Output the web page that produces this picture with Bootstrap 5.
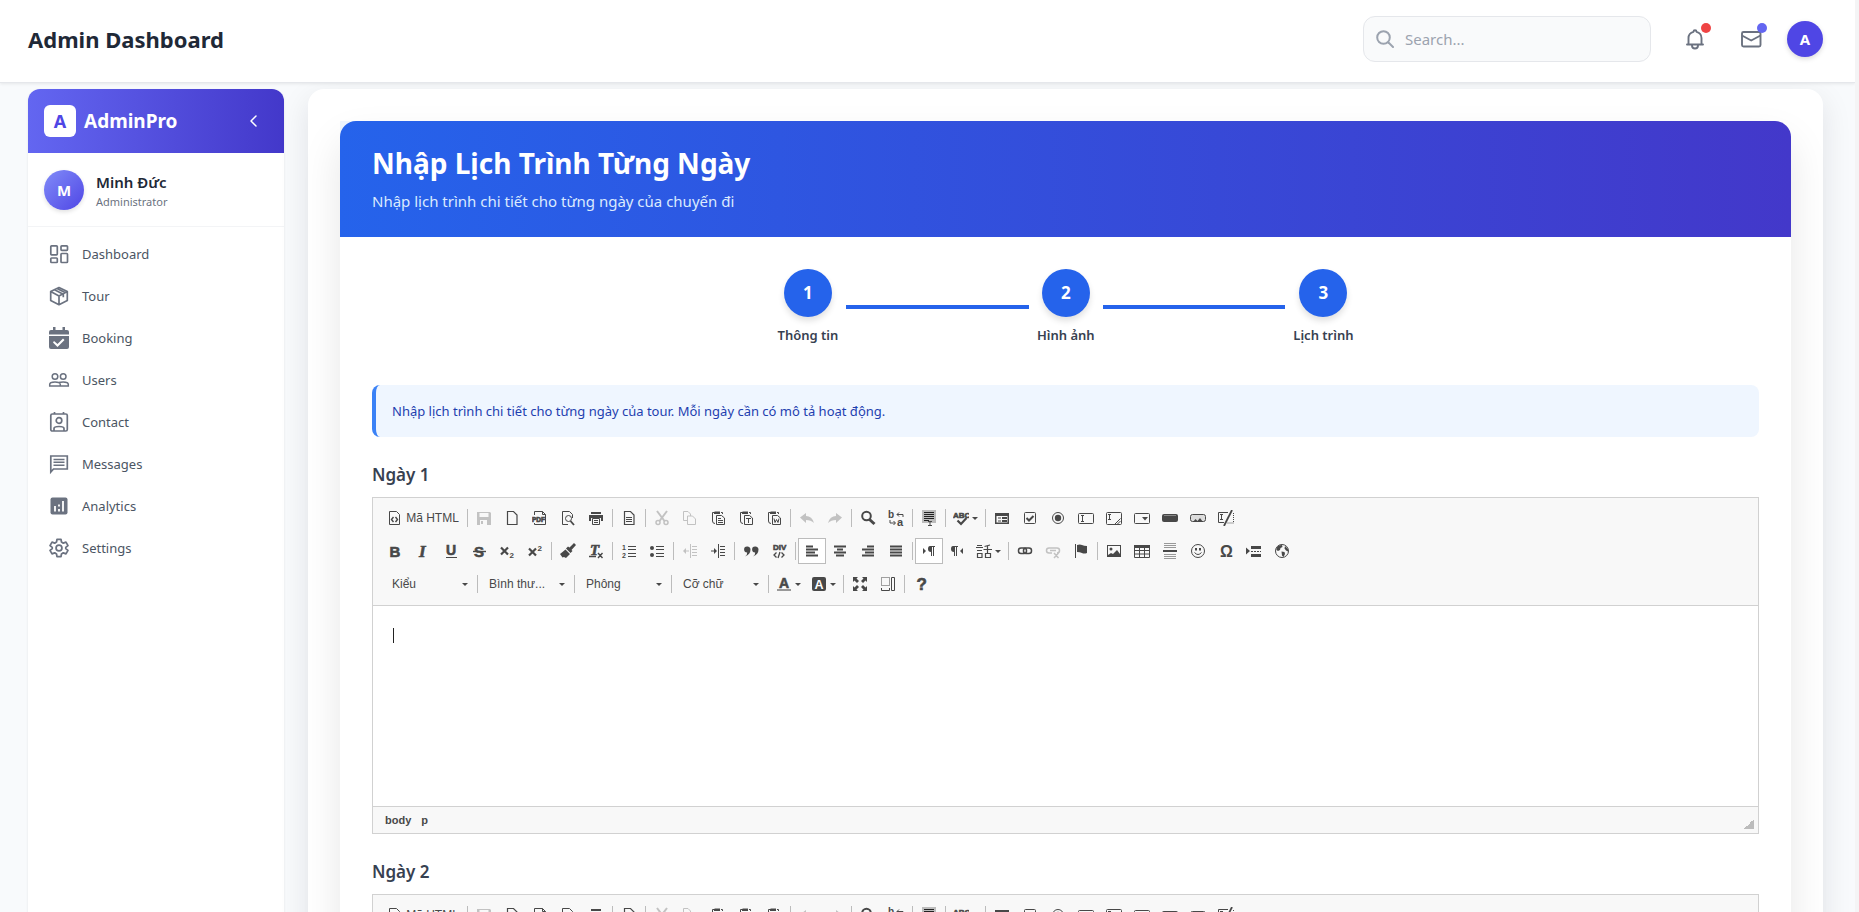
<!DOCTYPE html>
<html lang="vi">
<head>
<meta charset="utf-8">
<meta name="viewport" content="width=device-width, initial-scale=1">
<title>Admin Dashboard</title>
<link href="https://cdn.jsdelivr.net/npm/bootstrap@5.3.0/dist/css/bootstrap.min.css" rel="stylesheet">
<style>
  :root { --ink: #1f2937; --slate: #374151; --line: #d1d1d1; --indigo: #4f46e5; --blue: #2563eb; }
  body { font-family: "Noto Sans", "Open Sans", sans-serif; color: var(--ink); background: #f8fafc; line-height: 24px; }
  h1, h2, h3, p { margin: 0; }
  .shell { border-right: 4px solid #f4f4f5; }
  .topbar { background: #fff; border-bottom: 1px solid #e5e7eb; box-shadow: 0 1px 3px rgba(0,0,0,.08); padding: 16px 32px 20px 28px; z-index: 2; }
  .brand-title { font-size: 22px; font-weight: 700; line-height: 32px; }
  .top-actions { gap: 32px; }
  .search-box { width: 288px; height: 46px; background: #f9fafb; border: 1px solid #e5e7eb; border-radius: 12px; padding: 0 12px; gap: 9px; color: #9ca3af; }
  .search-box input { border: 0; outline: 0; background: none; width: 100%; font-size: 15px; }
  .search-box input::placeholder { color: #9ca3af; }
  .icon-btn { border: 0; background: none; padding: 0; width: 24px; height: 24px; color: #6b7280; line-height: 0; }
  .dot { width: 10px; height: 10px; top: -4px; right: -4px; }
  .dot-alert { background: #ef4444; }
  .dot-mail { background: #6366f1; }
  .face { width: 36px; height: 36px; background: var(--indigo); color: #fff; font-weight: 700; border: 0; box-shadow: 0 2px 5px rgba(0,0,0,.15); font-size: 15px; }
  .page { padding: 6px 32px 0 28px; gap: 24px; }

  .side { width: 256px; background: #fff; border-radius: 12px 12px 0 0; box-shadow: 0 1px 3px rgba(0,0,0,.08); }
  .side-head { height: 64px; padding: 0 18px 0 16px; border-radius: 12px 12px 0 0; background: linear-gradient(to right, #6366f1, #4338ca); color: #fff; }
  .side-logo { width: 32px; height: 32px; border-radius: 6px; background: #fff; color: var(--indigo); font-weight: 700; font-size: 18px; }
  .side-name { font-size: 19px; font-weight: 700; }
  .side-user { height: 74px; padding: 0 16px; gap: 12px; border-bottom: 1px solid #f3f4f6; }
  .side-user .pic { width: 40px; height: 40px; background: linear-gradient(135deg, #818cf8, #4f46e5); color: #fff; font-weight: 700; font-size: 15px; box-shadow: 0 2px 4px rgba(0,0,0,.12); }
  .user-name { font-size: 15px; font-weight: 600; line-height: 24px; }
  .user-role { font-size: 11px; line-height: 16px; color: #6b7280; }
  .side-nav { padding: 8px; gap: 4px; }
  .side-nav a { height: 38px; padding: 0 12px; gap: 12px; color: #4b5563; font-size: 13px; text-decoration: none; }
  .side-nav svg { width: 22px; height: 22px; color: #6b7280; }

  .stage { min-width: 0; background: #fff; border-radius: 16px 16px 0 0; padding: 32px 32px 0; box-shadow: 0 10px 30px rgba(15,23,42,.1); }
  .sheet-wrap { background: linear-gradient(to right, #eff6ff, #fff); }
  .sheet { background: #fff; border-radius: 16px 16px 0 0; box-shadow: 0 20px 40px rgba(0,0,0,.1); }
  .sheet-body { padding: 32px; }
  .banner { padding: 24px 32px; border-radius: 16px 16px 0 0; background: linear-gradient(to right, #2563eb, #4338ca); color: #fff; }
  .banner h2 { font-size: 28px; line-height: 36px; font-weight: 700; margin-bottom: 8px; }
  .banner p { color: #dbeafe; font-size: 15px; }
  .steps { max-width: 576px; margin: 0 auto 40px; }
  .step-num { width: 48px; height: 48px; background: var(--blue); color: #fff; font-weight: 700; font-size: 17px; box-shadow: 0 4px 6px rgba(0,0,0,.12); }
  .step-label { margin-top: 8px; font-size: 13px; line-height: 20px; font-weight: 600; color: var(--slate); }
  .step-line { height: 4px; background: var(--blue); margin: 0 8px; }
  .hint { background: #eff6ff; border-left: 4px solid #3b82f6; border-radius: 8px; color: #1e40af; font-size: 13px; line-height: 20px; padding: 16px; }
  .day { margin-top: 24px; }
  .day h3 { font-size: 17px; line-height: 28px; font-weight: 600; color: var(--slate); margin-bottom: 8px; }

  .editor { border: 1px solid var(--line); font-family: "Liberation Sans", sans-serif; color: #484848; }
  .tools { background: #f8f8f8; border-bottom: 1px solid var(--line); padding: 7px 8px 8px; }
  .tool-row { height: 26px; margin-bottom: 7px; }
  .tool-row:last-child { margin-bottom: 0; padding-left: 2px; }
  .tb { width: 28px; height: 26px; border: 1px solid transparent; background: none; padding: 0; color: #484848; font-size: 12px; line-height: 16px; display: flex; align-items: center; justify-content: center; flex: none; }
  .tb svg { width: 16px; height: 16px; flex: none; }
  .tb.named { width: 84px; gap: 3px; }
  .tb.drop { width: 35px; gap: 3px; }
  .tb.drop::after { content: ""; border: 3px solid transparent; border-top-color: #484848; border-bottom: 0; }
  .tb.on { background: #fff; border-color: #bcbcbc; }
  .tb:disabled { opacity: .3; color: #484848; }
  .rule { width: 1px; height: 18px; background: #bcbcbc; margin: 0 2px; flex: none; }
  .combo { width: 92px; height: 26px; border: 0; padding: 0 22px 0 9px; appearance: none; color: #484848; font-size: 12px; text-overflow: ellipsis; flex: none;
    background: url("data:image/svg+xml,%3Csvg xmlns='http://www.w3.org/2000/svg' width='6' height='3'%3E%3Cpath d='M0 0h6L3 3z' fill='%23484848'/%3E%3C/svg%3E") no-repeat 79px 12px; }
  .writing { height: 200px; padding: 22px 20px; outline: 0; background: #fff; }
  .caret { display: block; width: 1px; height: 15px; background: #222; }
  .status { height: 26px; background: #f8f8f8; border-top: 1px solid var(--line); padding: 0 4px 0 12px; gap: 10px; font-size: 11px; font-weight: 700; box-sizing: content-box; }
  .status a { color: #484848; text-decoration: none; }
  .grip { width: 10px; height: 10px; background: linear-gradient(135deg, transparent 50%, #bcbcbc 50%); }
  svg text { font-family: "Liberation Sans", sans-serif; fill: currentColor; stroke: none; }
  svg text.heavy { stroke: currentColor; stroke-width: .6px; }
</style>
</head>
<body>
<svg class="d-none" aria-hidden="true">
  <defs>
    <g id="sheet-shape" fill="none" stroke="currentColor" stroke-width="1.200"><path d="M3.500 1.500h6l3.500 3.500v9.500h-9.500z"/></g>
    <g id="clip-shape" fill="none" stroke="currentColor"><path d="M4 2.500H2.500V11q0 2.500 2.500 2.500M11 2.500h1.500V4"/><path d="M5 1.500h5V4H4V2z" fill="currentColor" stroke="none"/><path d="M6.500 5.500h5l3 2.500v6.500h-8z"/></g>
  </defs>
  <symbol id="t-source" viewBox="0 0 16 16"><g fill="none" stroke="currentColor"><path d="M2.500 1.500h7l3 3v10h-10z"/><path d="M6.500 7L4.500 9.500l2 2.500M8.500 7l2 2.500-2 2.500" stroke-width="1.400"/></g></symbol>
  <symbol id="t-save" viewBox="0 0 16 16"><path fill="currentColor" fill-rule="evenodd" d="M1 2h13l1 1v12H1zM3.500 3v4h9V3zM4 10v5h7v-5zM5 11h2v3H5z"/></symbol>
  <symbol id="t-new" viewBox="0 0 16 16"><use href="#sheet-shape"/></symbol>
  <symbol id="t-pdf" viewBox="0 0 16 16"><path d="M2.500 5V1.500h8l3 3V14.500h-11V13M10.500 1.500v3h3" fill="none" stroke="currentColor"/><rect x="0" y="6" width="13" height="6" fill="#f8f8f8"/><text class="heavy" x="0" y="11.500" font-size="6.500" font-weight="700">PDF</text></symbol>
  <symbol id="t-preview" viewBox="0 0 16 16"><g fill="none" stroke="currentColor"><path d="M12.500 8V4.500l-3-3h-7v13H8"/><circle cx="8.500" cy="8.500" r="3"/><path d="M10.500 11l3.500 4" stroke-width="1.800"/></g></symbol>
  <symbol id="t-print" viewBox="0 0 16 16"><path fill="currentColor" d="M3 2h10v2H3zM1 5h14v6h-2V8H3v3H1z"/><path d="M4.500 8.500h7v6h-7zM6 10.500h4M6 12.500h4" fill="none" stroke="currentColor"/></symbol>
  <symbol id="t-templates" viewBox="0 0 16 16"><use href="#sheet-shape"/><path d="M5 7.500h6M5 9.500h6M5 11.500h6" stroke="currentColor"/></symbol>
  <symbol id="t-cut" viewBox="0 0 16 16"><g fill="none" stroke="currentColor"><path d="M3 1l7.500 10M13 1L5.500 11" stroke-width="2"/><circle cx="4" cy="12.500" r="2" stroke-width="1.500"/><circle cx="12" cy="12.500" r="2" stroke-width="1.500"/></g></symbol>
  <symbol id="t-copy" viewBox="0 0 16 16"><path d="M5 10.500H1.500v-9H6l2.500 2.500v2M5.500 6h5l3 3v5.500h-8z" fill="none" stroke="currentColor"/></symbol>
  <symbol id="t-paste" viewBox="0 0 16 16"><use href="#clip-shape"/><path d="M8 8.500h3M8 10.500h5M8 12.500h5" stroke="currentColor"/></symbol>
  <symbol id="t-pastetext" viewBox="0 0 16 16"><use href="#clip-shape"/><path d="M8 8.500h5M10.500 8v5" stroke="currentColor"/></symbol>
  <symbol id="t-pasteword" viewBox="0 0 16 16"><use href="#clip-shape"/><path d="M8 8.500l1 4 1.500-3 1.500 3 1-4" fill="none" stroke="currentColor"/></symbol>
  <symbol id="t-undo" viewBox="0 0 16 16"><path fill="currentColor" d="M1 7.500L7 3v3q6 0 8 7-3-3-8-3v3z"/></symbol>
  <symbol id="t-redo" viewBox="0 0 16 16"><path fill="currentColor" d="M15 7.500L9 3v3q-6 0-8 7 3-3 8-3v3z"/></symbol>
  <symbol id="t-find" viewBox="0 0 16 16"><circle cx="6.500" cy="6" r="4.300" fill="none" stroke="currentColor" stroke-width="2"/><path d="M9.500 9.500l5 4.500" stroke="currentColor" stroke-width="3"/></symbol>
  <symbol id="t-replace" viewBox="0 0 16 16"><text x="0" y="8" font-size="10" font-weight="700">b</text><text x="9" y="15.500" font-size="11" font-weight="700">a</text><path d="M15 7V4.500H9M11 2.500L9 4.500l2 2M2 10v3h5M5.500 11l2 2-2 2" fill="none" stroke="currentColor"/></symbol>
  <symbol id="t-selectall" viewBox="0 0 16 16"><path fill="#bcbcbc" d="M1 0h14v13H1z"/><path d="M3 2.500h10M3 4.500h10M3 6.500h10M3 8.500h10M3 10.500h5" stroke="#222"/><path d="M7 11.500h4M7 15.500h4M9 11v5" stroke="currentColor"/></symbol>
  <symbol id="t-spell" viewBox="0 0 16 16"><text class="heavy" x="0" y="7.500" font-size="8" font-weight="700">ABC</text><path d="M4.500 10.500l3.500 3.500 5.500-6" fill="none" stroke="currentColor" stroke-width="2.200"/></symbol>
  <symbol id="t-form" viewBox="0 0 16 16"><path fill="currentColor" fill-rule="evenodd" d="M1 3h14v11H1zM2.500 6v6.500h11V6z"/><path d="M4 8h3M4 11h3" stroke="currentColor"/><path d="M8 8h5M8 11h5" stroke="currentColor" stroke-width="2"/></symbol>
  <symbol id="t-checkbox" viewBox="0 0 16 16"><rect x="2.500" y="2.500" width="11" height="11" rx="1" fill="none" stroke="currentColor"/><path d="M4.500 8l2.500 2.500 4.500-4.500" fill="none" stroke="currentColor" stroke-width="2"/></symbol>
  <symbol id="t-radio" viewBox="0 0 16 16"><circle cx="8" cy="8" r="5.500" fill="none" stroke="currentColor"/><circle cx="8" cy="8" r="3.200" fill="currentColor"/></symbol>
  <symbol id="t-text" viewBox="0 0 16 16"><g fill="none" stroke="currentColor"><rect x=".5" y="3.500" width="15" height="10" rx="1"/><path d="M3 5.500h3M3 11.500h3M4.500 5.500v6"/></g></symbol>
  <symbol id="t-area" viewBox="0 0 16 16"><g fill="none" stroke="currentColor"><rect x=".5" y="2.500" width="15" height="12" rx="1"/><path d="M2 4.500h3M2 9.500h3M3.500 4.500v5M9 14l5.500-5.500M11.500 14l3-3"/></g></symbol>
  <symbol id="t-select" viewBox="0 0 16 16"><rect x=".5" y="3.500" width="15" height="10" rx="1" fill="none" stroke="currentColor"/><path fill="currentColor" d="M8 7h6l-3 3.500z"/></symbol>
  <symbol id="t-button" viewBox="0 0 16 16"><rect x="0" y="4" width="16" height="8" rx="2" fill="currentColor"/><path d="M2 5.500h12" stroke="#888"/></symbol>
  <symbol id="t-imgbtn" viewBox="0 0 16 16"><rect x=".5" y="4.500" width="15" height="7" rx="2" fill="#ddd" stroke="currentColor"/><path fill="currentColor" d="M3 12l2.500-3 2 2 2.500-3 3 4z"/></symbol>
  <symbol id="t-hidden" viewBox="0 0 16 16"><g fill="none" stroke="currentColor"><path d="M10 2.500H.5v10H6M2 4.500h3M2 9.500h3M3.500 4.500v5"/><path d="M14 0L6 16" stroke-width="1.800"/><path d="M15.500 3v10H9" stroke-dasharray="1 1"/></g></symbol>

  <symbol id="t-bold" viewBox="0 0 16 16"><text class="heavy" x="2.500" y="13.500" font-size="15" font-weight="700">B</text></symbol>
  <symbol id="t-italic" viewBox="0 0 16 16"><text class="heavy" x="4" y="14" style="font-family:'Liberation Serif',serif" font-size="17" font-weight="700" font-style="italic">I</text></symbol>
  <symbol id="t-underline" viewBox="0 0 16 16"><text class="heavy" x="3" y="12" font-size="14" font-weight="700">U</text><path d="M3 14.500h11" stroke="currentColor"/></symbol>
  <symbol id="t-strike" viewBox="0 0 16 16"><text class="heavy" x="3" y="13.500" font-size="15" font-weight="700">S</text><path d="M2 8.500h13" stroke="currentColor" stroke-width="1.400"/></symbol>
  <symbol id="t-sub" viewBox="0 0 16 16"><path d="M2 4.500l7 7M9 4.500l-7 7" stroke="currentColor" stroke-width="2.200"/><text x="10.500" y="15" font-size="8" font-weight="700">2</text></symbol>
  <symbol id="t-sup" viewBox="0 0 16 16"><path d="M2 5.500l7 7M9 5.500l-7 7" stroke="currentColor" stroke-width="2.200"/><text x="10.500" y="8" font-size="8" font-weight="700">2</text></symbol>
  <symbol id="t-brush" viewBox="0 0 16 16"><path fill="currentColor" d="M14 0l2 2-4.500 5 1 1-2 2L6 5.500l2-2 1.500 1zM5.500 6.500l4.500 4.500-4 4-2-1-1.500.5L0 11l2.500-2z"/></symbol>
  <symbol id="t-clear" viewBox="0 0 16 16"><text class="heavy" x="2" y="12" style="font-family:'Liberation Serif',serif" font-size="15" font-weight="700" font-style="italic">T</text><path d="M1 13.500h7M10 10l4.500 5M14.500 10L10 15" stroke="currentColor" stroke-width="1.400"/></symbol>
  <symbol id="t-numbers" viewBox="0 0 16 16"><path d="M7 3.500h8M7 6.500h8M7 10.500h8M7 13.500h8" stroke="currentColor"/><text x="1" y="7" font-size="7" font-weight="700">1</text><text x="1" y="15" font-size="7" font-weight="700">2</text></symbol>
  <symbol id="t-bullets" viewBox="0 0 16 16"><path d="M7 3.500h8M7 6.500h8M7 10.500h8M7 13.500h8" stroke="currentColor"/><circle cx="3" cy="5" r="2" fill="currentColor"/><circle cx="3" cy="12" r="2" fill="currentColor"/></symbol>
  <symbol id="t-outdent" viewBox="0 0 16 16"><path d="M8.500 1v14M10 3.500h5M10 6.500h5M10 9.500h5M10 12.500h5M2 8h5" stroke="currentColor"/><path fill="currentColor" d="M1 8l3-3v6z"/></symbol>
  <symbol id="t-indent" viewBox="0 0 16 16"><path d="M8.500 1v14M10 3.500h5M10 6.500h5M10 9.500h5M10 12.500h5M1 8h4" stroke="currentColor"/><path fill="currentColor" d="M7 8L4 5v6z"/></symbol>
  <symbol id="t-quote" viewBox="0 0 16 16"><path fill="currentColor" d="M4 3.500A3 3 0 0 1 7.500 6.500Q7.500 11.500 2 13.500q2.500-2 2.200-4A3 3 0 0 1 4 3.500zM12 3.500A3 3 0 0 1 15.500 6.500Q15.500 11.500 10 13.500q2.500-2 2.200-4A3 3 0 0 1 12 3.500z"/></symbol>
  <symbol id="t-div" viewBox="0 0 16 16"><text class="heavy" x="2" y="7" font-size="8" font-weight="700">DIV</text><path d="M5.500 9.500l-2.500 2.500 2.500 2.500M10.500 9.500l2.500 2.500-2.500 2.500M9 9l-2 6" fill="none" stroke="currentColor" stroke-width="1.300"/></symbol>
  <symbol id="t-left" viewBox="0 0 16 16"><path d="M2 3.500h7M2 6.500h12M2 9.500h9M2 12.500h12" stroke="currentColor" stroke-width="2"/></symbol>
  <symbol id="t-center" viewBox="0 0 16 16"><path d="M2 3.500h12M5 6.500h6M2 9.500h12M4 12.500h8" stroke="currentColor" stroke-width="2"/></symbol>
  <symbol id="t-right" viewBox="0 0 16 16"><path d="M7 3.500h7M2 6.500h12M5 9.500h9M2 12.500h12" stroke="currentColor" stroke-width="2"/></symbol>
  <symbol id="t-justify" viewBox="0 0 16 16"><path d="M2 3.500h12M2 6.500h12M2 9.500h12M2 12.500h12" stroke="currentColor" stroke-width="2"/></symbol>
  <symbol id="t-ltr" viewBox="0 0 16 16"><path fill="currentColor" d="M2 5l3 3-3 3zM9 3h5v1h-1v9h-1V4h-1v9h-1V9Q7 9 7 6t2-3z"/></symbol>
  <symbol id="t-rtl" viewBox="0 0 16 16"><path fill="currentColor" d="M14 5l-3 3 3 3zM4 3h5v1H8v9H7V4H6v9H5V9Q2 9 2 6t2-3z"/></symbol>
  <symbol id="t-lang" viewBox="0 0 16 16"><path d="M0 4.500h7M1 2.500h5M1 7.500h5M1.500 10.500h4.500v4H1.500zM14 2L8.500 3.500M7.500 6.500H16M11.500 3v7M9.500 10.500h5v4h-5z" fill="none" stroke="currentColor" stroke-width="1.200"/></symbol>
  <symbol id="t-link" viewBox="0 0 16 16"><g fill="none" stroke="currentColor" stroke-width="1.500"><rect x="1.500" y="5" width="8" height="5.500" rx="2.500"/><rect x="6.500" y="5" width="8" height="5.500" rx="2.500"/></g></symbol>
  <symbol id="t-unlink" viewBox="0 0 16 16"><g fill="none" stroke="currentColor" stroke-width="1.500"><path d="M7 10H4a2.500 2.500 0 0 1 0-5h5M8 5h4a2.500 2.500 0 0 1 0 5M9 10l4.500 5M13.500 10L9 15M5 7.500h6"/></g></symbol>
  <symbol id="t-flag" viewBox="0 0 16 16"><path d="M2.500 1v14" stroke="currentColor"/><path fill="currentColor" d="M4 2q3-1 5 0t5 1v7q-3 1-5 0T4 9z"/></symbol>
  <symbol id="t-image" viewBox="0 0 16 16"><rect x="1.500" y="2.500" width="13" height="11" fill="none" stroke="currentColor"/><circle cx="5" cy="6" r="1.500" fill="currentColor"/><path fill="currentColor" d="M2 12l3-2 2 1 4-4 3 4v2H2z"/></symbol>
  <symbol id="t-table" viewBox="0 0 16 16"><path fill="currentColor" d="M0 2h16v3H0z"/><path d="M.5 4v10.500h15V4M.5 7.500h15M.5 11h15M5.500 4v10M10.500 4v10" fill="none" stroke="currentColor"/></symbol>
  <symbol id="t-hr" viewBox="0 0 16 16"><path d="M2 .5h12M2 2.500h12M2 4.500h12M2 11.500h12M2 13.500h12M2 15.500h12" stroke="#999"/><path d="M1 8h14" stroke="currentColor" stroke-width="2"/></symbol>
  <symbol id="t-smile" viewBox="0 0 16 16"><g fill="none" stroke="currentColor"><circle cx="8" cy="8" r="6.500"/><path d="M4.500 9.500q3.500 4 7 0"/></g><path fill="currentColor" d="M5 5h2v2.500H5zM9 5h2v2.500H9z"/></symbol>
  <symbol id="t-omega" viewBox="0 0 16 16"><text x="2" y="14" font-size="16" font-weight="700">Ω</text></symbol>
  <symbol id="t-break" viewBox="0 0 16 16"><path fill="currentColor" d="M0 4.500l4 3.500-4 3.500zM5 3h10v3H5zM5 11h10v3H5z"/><path d="M5 8.500h10" stroke="currentColor" stroke-dasharray="2 1"/></symbol>
  <symbol id="t-globe" viewBox="0 0 16 16"><circle cx="8" cy="8" r="6.500" fill="none" stroke="currentColor"/><path fill="currentColor" d="M2.500 5l2-2.500L8 2l.5 2-2 1-.5 2-2 1-1.500-1zM7.500 8.500l3 .5.500 2-1.500 3-1.500-1.500zM11 3l3 3v2.500l-2-1-1.500-2z"/></symbol>
  <symbol id="t-color" viewBox="0 0 16 16"><text class="heavy" x="3" y="11.500" font-size="14" font-weight="700">A</text><path d="M1 14h14" stroke="#999" stroke-width="2"/></symbol>
  <symbol id="t-bg" viewBox="0 0 16 16"><rect x="1" y="1" width="14" height="14" rx="2" fill="currentColor"/><text x="3.500" y="12.500" font-size="12.500" font-weight="700" style="fill:#fff">A</text></symbol>
  <symbol id="t-max" viewBox="0 0 16 16"><path fill="currentColor" d="M1 1h5L4.500 2.500l2.500 2.500-2 2-2.500-2.500L1 6zM15 1h-5l1.500 1.500L9 5l2 2 2.500-2.500L15 6zM1 15h5l-1.500-1.500L7 11 5 9l-2.500 2.500L1 10zM15 15h-5l1.500-1.500L9 11l2-2 2.500 2.500L15 10z"/></symbol>
  <symbol id="t-blocks" viewBox="0 0 16 16"><g fill="none" stroke="currentColor"><path d="M1.500 1.500h8v8h-8z" stroke-dasharray="1 1"/><path d="M1.500 12v2.500h8V12M11.500 1.500h3v13h-3z"/></g></symbol>
  <symbol id="t-help" viewBox="0 0 16 16"><text class="heavy" x="3.500" y="14" font-size="17" font-weight="700">?</text></symbol>
</svg>

<div class="shell vh-100 overflow-hidden d-flex flex-column">
  <header class="topbar d-flex align-items-center justify-content-between position-relative">
    <h1 class="brand-title">Admin Dashboard</h1>
    <div class="top-actions d-flex align-items-center">
      <label class="search-box d-flex align-items-center">
        <svg width="18" height="18" viewBox="0 0 18 18" fill="none" stroke="currentColor" stroke-width="2" stroke-linecap="round" class="flex-shrink-0"><circle cx="7.500" cy="7.500" r="6.300"/><path d="M12.500 12.500l4.500 4.500"/></svg>
        <input type="search" placeholder="Search..." aria-label="Search">
      </label>
      <button type="button" class="icon-btn position-relative" aria-label="Notifications">
        <svg width="24" height="24" viewBox="0 0 24 24" fill="none" stroke="currentColor" stroke-width="1.900" stroke-linejoin="round" stroke-linecap="round"><path d="M4 17.500h16M5.500 17v-6a6.500 6.500 0 0 1 5-6.200 1.500 1.500 0 0 1 3 0 6.500 6.500 0 0 1 5 6.200v6M9 18.500a3 3 0 0 0 6 0"/></svg>
        <span class="dot dot-alert position-absolute rounded-circle"></span>
      </button>
      <div class="d-flex align-items-center gap-4">
        <button type="button" class="icon-btn position-relative" aria-label="Mail">
          <svg width="24" height="24" viewBox="0 0 24 24" fill="none" stroke="currentColor" stroke-width="1.900" stroke-linejoin="round"><rect x="3" y="5" width="18.500" height="14.500" rx="1.500"/><path d="M3 8.500l9.200 5 9.300-5"/></svg>
          <span class="dot dot-mail position-absolute rounded-circle"></span>
        </button>
        <button type="button" class="face rounded-circle p-0">A</button>
      </div>
    </div>
  </header>

  <div class="page d-flex flex-grow-1">
    <aside class="side flex-shrink-0">
      <div class="side-head d-flex align-items-center gap-2">
        <span class="side-logo d-flex align-items-center justify-content-center">A</span>
        <span class="side-name">AdminPro</span>
        <button type="button" class="icon-btn ms-auto text-white" aria-label="Collapse menu"><svg width="18" height="18" viewBox="0 0 18 18" fill="none" stroke="currentColor" stroke-width="1.500" stroke-linecap="round" stroke-linejoin="round"><path d="M11 4L6 9l5 5"/></svg></button>
      </div>
      <div class="side-user d-flex align-items-center">
        <span class="pic rounded-circle d-flex align-items-center justify-content-center">M</span>
        <div><div class="user-name">Minh Đức</div><div class="user-role">Administrator</div></div>
      </div>
      <nav class="side-nav d-flex flex-column">
        <a href="#" class="d-flex align-items-center"><svg viewBox="0 0 22 22" fill="none" stroke="currentColor" stroke-width="1.700"><rect x="2.800" y="2.800" width="6.500" height="9" rx=".8"/><rect x="13" y="2.800" width="6.500" height="4.500" rx=".8"/><rect x="2.800" y="15" width="6.500" height="4.500" rx=".8"/><rect x="13" y="10.500" width="6.500" height="9" rx=".8"/></svg>Dashboard</a>
        <a href="#" class="d-flex align-items-center"><svg viewBox="0 0 22 22" fill="none" stroke="currentColor" stroke-width="1.700" stroke-linejoin="round"><path d="M11 2.500l8.300 4v9L11 19.700l-8.300-4.200v-9zM2.700 6.500L11 11l8.300-4.500M11 11v8.700M6.500 4.800l8.800 4.500v3M9 3.500l8 4"/></svg>Tour</a>
        <a href="#" class="d-flex align-items-center"><svg viewBox="0 0 22 22"><path fill="currentColor" fill-rule="evenodd" d="M5 0h2.500v3h7V0H17v3h2q2 0 2 2v2.500H1V5q0-2 2-2h2zM1 9h20v11q0 2-2 2H3q-2 0-2-2zM6 14l-1 1.500 4.500 4.500 7-7-1.500-1.500-5.500 5.500z"/></svg>Booking</a>
        <a href="#" class="d-flex align-items-center"><svg viewBox="0 0 22 22" fill="none" stroke="currentColor" stroke-width="1.500"><circle cx="7" cy="7.500" r="2.800"/><circle cx="15.200" cy="7.500" r="2.800"/><path d="M1.700 17v-1.500q0-2.500 5.300-2.500t5.300 2.500V17zM10.500 13.500q2-.5 4.700-.5 5.100 0 5.100 2.500V17h-8"/></svg>Users</a>
        <a href="#" class="d-flex align-items-center"><svg viewBox="0 0 22 22" fill="none" stroke="currentColor" stroke-width="1.700"><rect x="2.800" y="3" width="16.500" height="17" rx="1.500"/><circle cx="11" cy="9.500" r="2.800"/><path d="M6 20v-2.500q0-2 5-2t5 2V20M6.500 1v2M15.500 1v2"/></svg>Contact</a>
        <a href="#" class="d-flex align-items-center"><svg viewBox="0 0 22 22" fill="none" stroke="currentColor" stroke-width="1.700"><path d="M2.800 19V3h16.500v13H5.500z"/><path d="M5.500 6.500h11M5.500 9.300h11M5.500 12.200h11" stroke-width="1.500"/></svg>Messages</a>
        <a href="#" class="d-flex align-items-center"><svg viewBox="0 0 22 22"><rect x="2.500" y="2.500" width="17" height="17" rx="2" fill="currentColor"/><path d="M7 11v5.500M11 14v2.500M11 9.500v2M15 6v10.500" stroke="#fff" stroke-width="1.800"/></svg>Analytics</a>
        <a href="#" class="d-flex align-items-center"><svg viewBox="0 0 24 24" fill="none" stroke="currentColor" stroke-width="1.900" stroke-linejoin="round"><circle cx="12" cy="12" r="3.200"/><path d="M9.800 2.500h4.400l.5 3 2 1.200 2.900-1.100 2.200 3.800-2.400 1.900v1.400l2.400 1.900-2.200 3.800-2.900-1.100-2 1.200-.5 3H9.800l-.5-3-2-1.200-2.900 1.100-2.200-3.800 2.400-1.900v-1.400L2.200 9.400l2.200-3.800 2.900 1.100 2-1.200z"/></svg>Settings</a>
      </nav>
    </aside>

    <main class="stage flex-grow-1">
      <div class="sheet-wrap">
        <div class="sheet">
          <div class="banner">
            <h2>Nhập Lịch Trình Từng Ngày</h2>
            <p>Nhập lịch trình chi tiết cho từng ngày của chuyến đi</p>
          </div>
          <div class="sheet-body">
            <div class="steps d-flex align-items-center">
              <div class="d-flex flex-column align-items-center"><span class="step-num rounded-circle d-flex align-items-center justify-content-center">1</span><span class="step-label">Thông tin</span></div>
              <div class="step-line flex-grow-1"></div>
              <div class="d-flex flex-column align-items-center"><span class="step-num rounded-circle d-flex align-items-center justify-content-center">2</span><span class="step-label">Hình ảnh</span></div>
              <div class="step-line flex-grow-1"></div>
              <div class="d-flex flex-column align-items-center"><span class="step-num rounded-circle d-flex align-items-center justify-content-center">3</span><span class="step-label">Lịch trình</span></div>
            </div>
            <div class="hint">Nhập lịch trình chi tiết cho từng ngày của tour. Mỗi ngày cần có mô tả hoạt động.</div>

            <section class="day">
              <h3>Ngày 1</h3>
              <div class="editor" id="editor-1">
                <div class="tools">
                  <div class="tool-row d-flex align-items-center">
                    <button type="button" class="tb named"><svg><use href="#t-source"/></svg>Mã HTML</button><i class="rule"></i>
                    <button type="button" class="tb" disabled aria-label="Lưu"><svg><use href="#t-save"/></svg></button>
                    <button type="button" class="tb" aria-label="Trang mới"><svg><use href="#t-new"/></svg></button>
                    <button type="button" class="tb" aria-label="PDF"><svg><use href="#t-pdf"/></svg></button>
                    <button type="button" class="tb" aria-label="Xem trước"><svg><use href="#t-preview"/></svg></button>
                    <button type="button" class="tb" aria-label="In"><svg><use href="#t-print"/></svg></button><i class="rule"></i>
                    <button type="button" class="tb" aria-label="Mẫu"><svg><use href="#t-templates"/></svg></button><i class="rule"></i>
                    <button type="button" class="tb" disabled aria-label="Cắt"><svg><use href="#t-cut"/></svg></button>
                    <button type="button" class="tb" disabled aria-label="Sao chép"><svg><use href="#t-copy"/></svg></button>
                    <button type="button" class="tb" aria-label="Dán"><svg><use href="#t-paste"/></svg></button>
                    <button type="button" class="tb" aria-label="Dán văn bản"><svg><use href="#t-pastetext"/></svg></button>
                    <button type="button" class="tb" aria-label="Dán từ Word"><svg><use href="#t-pasteword"/></svg></button><i class="rule"></i>
                    <button type="button" class="tb" disabled aria-label="Hoàn tác"><svg><use href="#t-undo"/></svg></button>
                    <button type="button" class="tb" disabled aria-label="Làm lại"><svg><use href="#t-redo"/></svg></button><i class="rule"></i>
                    <button type="button" class="tb" aria-label="Tìm"><svg><use href="#t-find"/></svg></button>
                    <button type="button" class="tb" aria-label="Thay thế"><svg><use href="#t-replace"/></svg></button><i class="rule"></i>
                    <button type="button" class="tb" aria-label="Chọn tất cả"><svg><use href="#t-selectall"/></svg></button><i class="rule"></i>
                    <button type="button" class="tb drop" aria-label="Chính tả"><svg><use href="#t-spell"/></svg></button><i class="rule"></i>
                    <button type="button" class="tb" aria-label="Biểu mẫu"><svg><use href="#t-form"/></svg></button>
                    <button type="button" class="tb" aria-label="Ô chọn"><svg><use href="#t-checkbox"/></svg></button>
                    <button type="button" class="tb" aria-label="Nút radio"><svg><use href="#t-radio"/></svg></button>
                    <button type="button" class="tb" aria-label="Ô chữ"><svg><use href="#t-text"/></svg></button>
                    <button type="button" class="tb" aria-label="Vùng chữ"><svg><use href="#t-area"/></svg></button>
                    <button type="button" class="tb" aria-label="Danh sách chọn"><svg><use href="#t-select"/></svg></button>
                    <button type="button" class="tb" aria-label="Nút"><svg><use href="#t-button"/></svg></button>
                    <button type="button" class="tb" aria-label="Nút hình"><svg><use href="#t-imgbtn"/></svg></button>
                    <button type="button" class="tb" aria-label="Trường ẩn"><svg><use href="#t-hidden"/></svg></button>
                  </div>
                  <div class="tool-row d-flex align-items-center">
                    <button type="button" class="tb" aria-label="Đậm"><svg><use href="#t-bold"/></svg></button>
                    <button type="button" class="tb" aria-label="Nghiêng"><svg><use href="#t-italic"/></svg></button>
                    <button type="button" class="tb" aria-label="Gạch chân"><svg><use href="#t-underline"/></svg></button>
                    <button type="button" class="tb" aria-label="Gạch ngang"><svg><use href="#t-strike"/></svg></button>
                    <button type="button" class="tb" aria-label="Chỉ số dưới"><svg><use href="#t-sub"/></svg></button>
                    <button type="button" class="tb" aria-label="Chỉ số trên"><svg><use href="#t-sup"/></svg></button><i class="rule"></i>
                    <button type="button" class="tb" aria-label="Sao chép định dạng"><svg><use href="#t-brush"/></svg></button>
                    <button type="button" class="tb" aria-label="Xóa định dạng"><svg><use href="#t-clear"/></svg></button><i class="rule"></i>
                    <button type="button" class="tb" aria-label="Danh sách số"><svg><use href="#t-numbers"/></svg></button>
                    <button type="button" class="tb" aria-label="Danh sách chấm"><svg><use href="#t-bullets"/></svg></button><i class="rule"></i>
                    <button type="button" class="tb" disabled aria-label="Giảm thụt lề"><svg><use href="#t-outdent"/></svg></button>
                    <button type="button" class="tb" aria-label="Tăng thụt lề"><svg><use href="#t-indent"/></svg></button><i class="rule"></i>
                    <button type="button" class="tb" aria-label="Trích dẫn"><svg><use href="#t-quote"/></svg></button>
                    <button type="button" class="tb" aria-label="Khối DIV"><svg><use href="#t-div"/></svg></button><i class="rule"></i>
                    <button type="button" class="tb on" aria-label="Canh trái"><svg><use href="#t-left"/></svg></button>
                    <button type="button" class="tb" aria-label="Canh giữa"><svg><use href="#t-center"/></svg></button>
                    <button type="button" class="tb" aria-label="Canh phải"><svg><use href="#t-right"/></svg></button>
                    <button type="button" class="tb" aria-label="Canh đều"><svg><use href="#t-justify"/></svg></button><i class="rule"></i>
                    <button type="button" class="tb on" aria-label="Trái sang phải"><svg><use href="#t-ltr"/></svg></button>
                    <button type="button" class="tb" aria-label="Phải sang trái"><svg><use href="#t-rtl"/></svg></button>
                    <button type="button" class="tb drop" aria-label="Ngôn ngữ"><svg><use href="#t-lang"/></svg></button><i class="rule"></i>
                    <button type="button" class="tb" aria-label="Liên kết"><svg><use href="#t-link"/></svg></button>
                    <button type="button" class="tb" disabled aria-label="Bỏ liên kết"><svg><use href="#t-unlink"/></svg></button>
                    <button type="button" class="tb" aria-label="Neo"><svg><use href="#t-flag"/></svg></button><i class="rule"></i>
                    <button type="button" class="tb" aria-label="Hình ảnh"><svg><use href="#t-image"/></svg></button>
                    <button type="button" class="tb" aria-label="Bảng"><svg><use href="#t-table"/></svg></button>
                    <button type="button" class="tb" aria-label="Đường kẻ"><svg><use href="#t-hr"/></svg></button>
                    <button type="button" class="tb" aria-label="Mặt cười"><svg><use href="#t-smile"/></svg></button>
                    <button type="button" class="tb" aria-label="Ký tự đặc biệt"><svg><use href="#t-omega"/></svg></button>
                    <button type="button" class="tb" aria-label="Ngắt trang"><svg><use href="#t-break"/></svg></button>
                    <button type="button" class="tb" aria-label="IFrame"><svg><use href="#t-globe"/></svg></button>
                  </div>
                  <div class="tool-row d-flex align-items-center">
                    <select class="combo" aria-label="Kiểu"><option>Kiểu</option></select><i class="rule"></i>
                    <select class="combo" aria-label="Định dạng"><option>Bình thư...</option></select><i class="rule"></i>
                    <select class="combo" aria-label="Phông"><option>Phông</option></select><i class="rule"></i>
                    <select class="combo" aria-label="Cỡ chữ"><option>Cỡ chữ</option></select><i class="rule"></i>
                    <button type="button" class="tb drop" aria-label="Màu chữ"><svg><use href="#t-color"/></svg></button>
                    <button type="button" class="tb drop" aria-label="Màu nền"><svg><use href="#t-bg"/></svg></button><i class="rule"></i>
                    <button type="button" class="tb" aria-label="Phóng to"><svg><use href="#t-max"/></svg></button>
                    <button type="button" class="tb" aria-label="Hiển thị khối"><svg><use href="#t-blocks"/></svg></button><i class="rule"></i>
                    <button type="button" class="tb" aria-label="Trợ giúp"><svg><use href="#t-help"/></svg></button>
                  </div>
                </div>
                <div class="writing" contenteditable="true"><span class="caret"></span></div>
                <div class="status d-flex align-items-center"><a href="#">body</a><a href="#">p</a><span class="grip ms-auto mt-2"></span></div>
              </div>
            </section>
            <section class="day" id="day-2">
              <h3>Ngày 2</h3>
            </section>
          </div>
        </div>
      </div>
    </main>
  </div>
</div>
<script src="https://cdn.jsdelivr.net/npm/bootstrap@5.3.0/dist/js/bootstrap.bundle.min.js"></script>
<script>
  // The second day uses the same editor as the first, without the caret.
  const second = document.getElementById('editor-1').cloneNode(true);
  second.id = 'editor-2';
  second.querySelector('.caret').remove();
  document.getElementById('day-2').append(second);
</script>
</body>
</html>
